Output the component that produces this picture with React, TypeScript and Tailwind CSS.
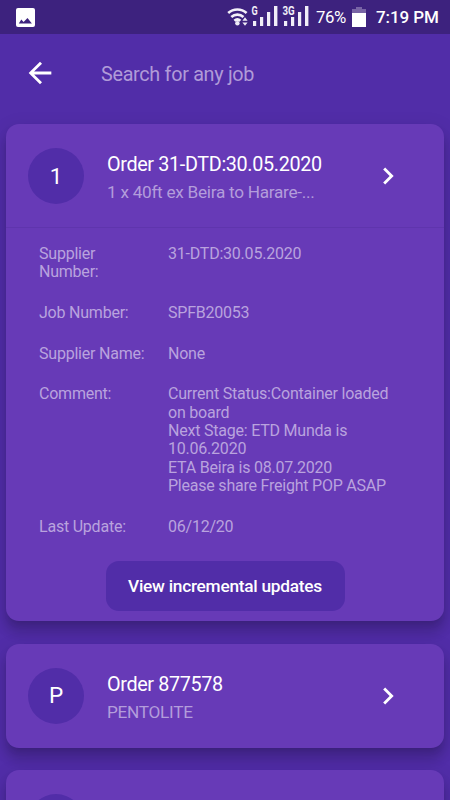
import type { ReactNode } from "react";

const details = [
  { label: "Supplier Number:", lines: ["31-DTD:30.05.2020"] },
  { label: "Job Number:", lines: ["SPFB20053"] },
  { label: "Supplier Name:", lines: ["None"] },
  {
    label: "Comment:",
    lines: [
      "Current Status:Container loaded on board",
      "Next Stage: ETD Munda is 10.06.2020",
      "ETA Beira is 08.07.2020",
      "Please share Freight POP ASAP",
    ],
  },
  { label: "Last Update:", lines: ["06/12/20"] },
];

function Signal({ label, small }: { label: string; small?: boolean }) {
  return (
    <svg width="28" height="26" viewBox="0 -2 28 26" className="shrink-0 overflow-visible">
      <g fill="#f1eef8">
        <rect x="2" y="15" width="3.2" height="5" />
        <rect x="9" y="11" width="3.2" height="9" />
        <rect x="16" y="6" width="3.2" height="14" />
        <rect x="23" y="0" width="3.4" height="20" />
        <text x="0.5" y="9" fontSize="12.5" fontWeight="700" textLength={small ? 6.2 : 12.2} lengthAdjust="spacingAndGlyphs">
          {label}
        </text>
      </g>
    </svg>
  );
}

function StatusBar() {
  return (
    <div className="flex h-[34px] shrink-0 items-center bg-[#3d227e] text-white">
      <svg width="19" height="19" viewBox="0 0 19 19" className="ml-4">
        <rect width="19" height="19" rx="2" fill="#fff" />
        <path d="M2.8 15.5 5.3 11.6l2.3 2.4L11.5 10l4.4 5.5Z" fill="#3d227e" />
      </svg>
      <svg width="24" height="20" viewBox="0 0 24 20" className="ml-[191.5px]" fill="none" stroke="#f4f1f9" strokeWidth="2.7">
        <path d="M1.2 6a13.8 13.8 0 0 1 18.4 0M4.3 10a9.2 9.2 0 0 1 12.2 0M7.4 13.8a4.6 4.6 0 0 1 6 0" />
        <circle cx="10.4" cy="16.3" r="2.2" fill="#eeeaf6" stroke="none" />
        <path d="m18 10.2 2.6 3.6h-5.2Zm0 8.6 2.6-3.4h-5.2Z" fill="#eeeaf6" stroke="none" />
      </svg>
      <div className="ml-[.5px] flex gap-[3px]">
        <Signal label="G" small />
        <Signal label="3G" />
      </div>
      <span className="ml-[6px] mt-[2px] w-[32px] whitespace-nowrap text-[16.8px] tracking-[-.4px]">76%</span>
      <svg width="14" height="21" viewBox="0 0 14 21" className="ml-[4px]">
        <path d="M4 0h6v2h4v5H0V2h4Z" fill="#7864a5" />
        <path d="M0 6h14v14H0Z" fill="#fff" />
      </svg>
      <span className="ml-[10px] mt-[2px] whitespace-nowrap text-[17px] font-medium tracking-[-.1px]">7:19 PM</span>
    </div>
  );
}

interface JobCardProps {
  initial?: string;
  title?: string;
  subtitle?: string;
  children?: ReactNode;
}

function JobCard({ initial, title, subtitle, children }: JobCardProps) {
  return (
    <section className="shrink-0 rounded-[13px] bg-[#673ab7] shadow-[0_6px_6px_-4px_rgba(0,0,0,.1),0_11px_12px_1px_rgba(0,0,0,.14),0_4px_18px_2px_rgba(0,0,0,.08)]">
      <div className="flex h-[104px] items-center pl-[22px]">
        <div className="flex size-14 shrink-0 items-center justify-center rounded-full bg-[#512da8] text-[22.5px] text-white">
          {initial}
        </div>
        <div className="ml-[23px] w-[258px] whitespace-nowrap pt-[5px]">
          <div className="text-[19.8px] leading-[28px] tracking-[-.35px] text-white">{title}</div>
          <div className="text-[17.2px] leading-[27px] tracking-[-.27px] text-[#b39ddb]">{subtitle}</div>
        </div>
        <svg width="34" height="34" viewBox="0 0 24 24" className="ml-[6px]" fill="#fff">
          <path d="M10 6 8.59 7.41 13.17 12l-4.58 4.59L10 18l6-6z" />
        </svg>
      </div>
      {children}
    </section>
  );
}

export default function App() {
  return (
    <main className="flex h-[800px] w-[450px] flex-col overflow-hidden bg-[#512da8] font-['Roboto',sans-serif]">
      <StatusBar />
      <header className="flex h-[78px] shrink-0 items-center">
        <svg width="34" height="34" viewBox="0 0 24 24" className="ml-[22.5px]" fill="#fff">
          <path d="M20 11H7.83l5.59-5.59L12 4l-8 8 8 8 1.41-1.41L7.83 13H20z" />
        </svg>
        <span className="ml-[44.5px] mt-[4px] text-[19.8px] tracking-[-.3px] text-[#b09bd8]">Search for any job</span>
      </header>
      <div className="flex min-h-0 flex-1 flex-col gap-[22.5px] overflow-hidden px-[6px] pt-[12.4px]">
        <JobCard initial="1" title="Order 31-DTD:30.05.2020" subtitle="1 x 40ft ex Beira to Harare-...">
          <div className="-mt-px flex h-[393.7px] flex-col border-t border-[#5f35ad] pl-[33px] pt-[16.7px]">
            <div className="flex flex-col gap-[22.3px] text-[16px] leading-[18.35px] tracking-[-.22px] text-[#b9a3de]">
              {details.map((row) => (
                <div key={row.label} className="flex">
                  <div className="w-[112px]">{row.label}</div>
                  <div className="ml-[17px] w-[235px]">
                    {row.lines.map((line) => (
                      <p key={line}>{line}</p>
                    ))}
                  </div>
                </div>
              ))}
            </div>
            <button className="ml-[66.5px] mt-[25.2px] h-[50px] w-[239px] shrink-0 rounded-[13px] bg-[#512da8] pt-px text-[17.3px] font-medium tracking-[-.26px] text-white">
              View incremental updates
            </button>
          </div>
        </JobCard>
        <JobCard initial="P" title="Order 877578" subtitle="PENTOLITE" />
        <JobCard />
      </div>
    </main>
  );
}
